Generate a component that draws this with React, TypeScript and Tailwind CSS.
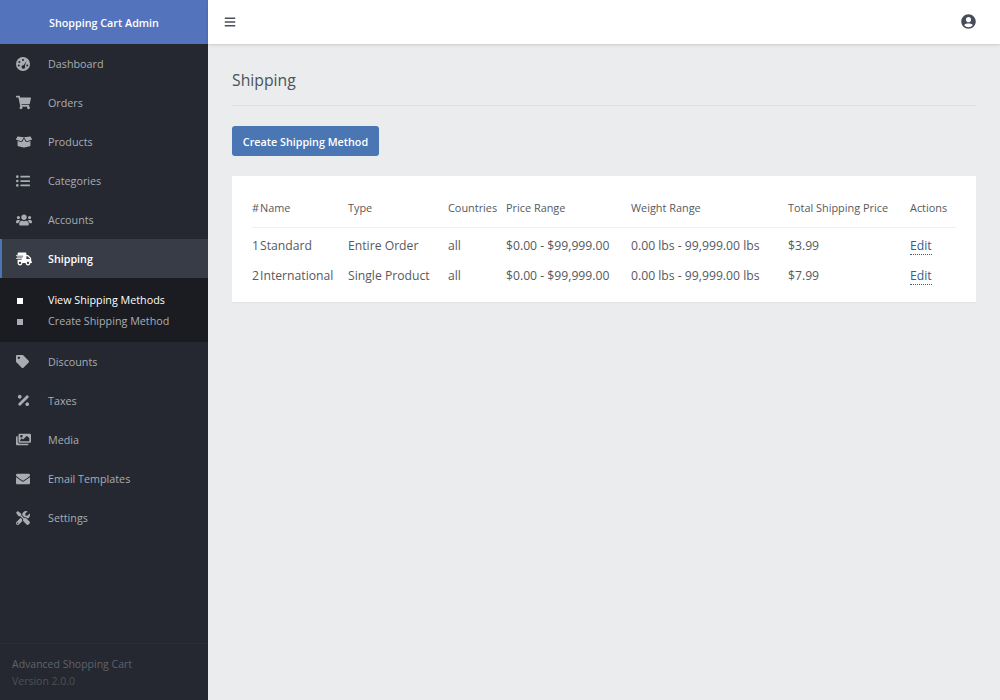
import {
  FaBars,
  FaBoxOpen,
  FaEnvelope,
  FaImages,
  FaListUl,
  FaPercentage,
  FaShippingFast,
  FaShoppingCart,
  FaTag,
  FaTools,
  FaUserCircle,
  FaUsers,
} from "react-icons/fa";
import type { IconType } from "react-icons";

// round gauge, the package's one has a flat bottom
const Gauge: IconType = ({ className }) => (
  <svg viewBox="0 0 14 14" className={className} width="1em" height="1em">
    <circle cx="7" cy="7" r="7" fill="currentColor" />
    <circle cx="7" cy="3" r="1" fill="#252830" />
    <circle cx="3.4" cy="5" r="1" fill="#252830" />
    <circle cx="2.8" cy="8.6" r="1" fill="#252830" />
    <circle cx="11.2" cy="8.6" r="1" fill="#252830" />
    <path d="M10.4 4 L7.6 8.2 A1.8 1.8 0 1 0 8.8 9 Z" fill="#252830" />
  </svg>
);

const topItems: { label: string; icon: IconType; size: string }[] = [
  { label: "Dashboard", icon: Gauge, size: "text-[14px]" },
  { label: "Orders", icon: FaShoppingCart, size: "text-[15px]" },
  { label: "Products", icon: FaBoxOpen, size: "text-[16px]" },
  { label: "Categories", icon: FaListUl, size: "text-[14px]" },
  { label: "Accounts", icon: FaUsers, size: "text-[16px]" },
];

const bottomItems: { label: string; icon: IconType; size: string }[] = [
  { label: "Discounts", icon: FaTag, size: "text-[13px]" },
  { label: "Taxes", icon: FaPercentage, size: "text-[15px]" },
  { label: "Media", icon: FaImages, size: "text-[15px]" },
  { label: "Email Templates", icon: FaEnvelope, size: "text-[14px]" },
  { label: "Settings", icon: FaTools, size: "text-[14px]" },
];

const rows = [
  { id: 1, name: "Standard", type: "Entire Order", total: "$3.99" },
  { id: 2, name: "International", type: "Single Product", total: "$7.99" },
];

const NavItem = ({ label, icon: Icon, size }: { label: string; icon: IconType; size: string }) => (
  <div className="flex h-[39px] items-center pl-4 text-[#a9adb3]">
    <span className="flex w-8 items-center">
      <Icon className={size} />
    </span>
    <span className="pt-[2px] text-[10.75px]">{label}</span>
  </div>
);

export default function App() {
  return (
    <div className="flex h-[700px] w-[1000px] overflow-hidden bg-[#eaecee] font-['Open_Sans',sans-serif]">
      {/* sidebar */}
      <aside className="flex w-[208px] shrink-0 flex-col bg-[#252830]">
        <div className="flex h-[44px] items-center justify-center bg-[#5373bd] pt-[3px] text-[10.75px] font-semibold text-white">
          Shopping Cart Admin
        </div>
        <nav className="flex-1">
          {topItems.map((item) => (
            <NavItem key={item.label} {...item} />
          ))}
          <div className="flex h-[39px] items-center border-l-2 border-[#4a76b4] bg-[#383c47] pl-[14px] text-white">
            <span className="flex w-8 items-center">
              <FaShippingFast className="text-[16px]" />
            </span>
            <span className="pt-[2px] text-[10.75px] font-semibold">Shipping</span>
          </div>
          <div className="flex h-[64px] flex-col justify-center gap-[6px] bg-[#1a1c21] pt-[2px] text-[10.75px]">
            <div className="flex h-[15px] items-center pl-[17px] text-white">
              <span className="mr-[25px] h-[6px] w-[6px] bg-white" />
              View Shipping Methods
            </div>
            <div className="flex h-[15px] items-center pl-[17px] text-[#a9adb3]">
              <span className="mr-[25px] h-[6px] w-[6px] bg-[#a9adb3]" />
              Create Shipping Method
            </div>
          </div>
          {bottomItems.map((item) => (
            <NavItem key={item.label} {...item} />
          ))}
        </nav>
        <div className="h-[57px] border-t border-[#2b2e37] pl-3 pt-[12px] text-[10.5px] leading-[17px] text-[#5f636b]">
          <div>Advanced Shopping Cart</div>
          <div className="text-[#4c5058]">Version 2.0.0</div>
        </div>
      </aside>

      {/* main */}
      <div className="flex min-w-0 flex-1 flex-col">
        <header className="flex h-[44px] shrink-0 items-center justify-between bg-white pb-[1px] pl-4 pr-[24px] shadow-[0_1px_3px_rgba(0,0,0,0.15)]">
          <FaBars className="text-[12px] text-[#4a4f5a]" />
          <FaUserCircle className="text-[15px] text-[#474c5a]" />
        </header>
        <main className="flex-1 px-6">
          <h1 className="mt-[24px] border-b border-[#dcdfe3] pb-[13px] text-[15.75px] leading-[24px] font-medium text-[#4d5259]">
            Shipping
          </h1>
          <button className="mt-[20px] block h-[30px] w-[147px] rounded-[3px] bg-[#4a76b4] pt-[3px] text-[10.75px] font-semibold text-white">
            Create Shipping Method
          </button>
          <div className="mt-[20px] h-[126px] bg-white px-5 pt-[12px] shadow-[0_1px_1px_rgba(0,0,0,0.04)]">
            <table className="w-[704px] table-fixed text-left text-[#555a60]">
              <colgroup>
                <col className="w-[8px]" />
                <col className="w-[88px]" />
                <col className="w-[100px]" />
                <col className="w-[58px]" />
                <col className="w-[125px]" />
                <col className="w-[157px]" />
                <col className="w-[122px]" />
                <col className="w-[46px]" />
              </colgroup>
              <thead>
                <tr className="h-[39px] border-b border-[#eef0f2] text-[10.9px]">
                  {["#", "Name", "Type", "Countries", "Price Range", "Weight Range", "Total Shipping Price", "Actions"].map(
                    (h) => (
                      <th key={h} className="whitespace-nowrap pt-[2px] font-normal">
                        {h}
                      </th>
                    ),
                  )}
                </tr>
              </thead>
              <tbody className="text-[12.2px] [&_td]:pt-[8px]">
                {rows.map((row) => (
                  <tr key={row.id} className="h-[30px]">
                    <td>{row.id}</td>
                    <td className="whitespace-nowrap">{row.name}</td>
                    <td className="whitespace-nowrap">{row.type}</td>
                    <td>all</td>
                    <td className="whitespace-nowrap">$0.00 - $99,999.00</td>
                    <td className="whitespace-nowrap">0.00 lbs - 99,999.00 lbs</td>
                    <td>{row.total}</td>
                    <td>
                      <a className="border-b border-dotted border-[#2a6496] text-[#2f6191]">Edit</a>
                    </td>
                  </tr>
                ))}
              </tbody>
            </table>
          </div>
        </main>
      </div>
    </div>
  );
}
